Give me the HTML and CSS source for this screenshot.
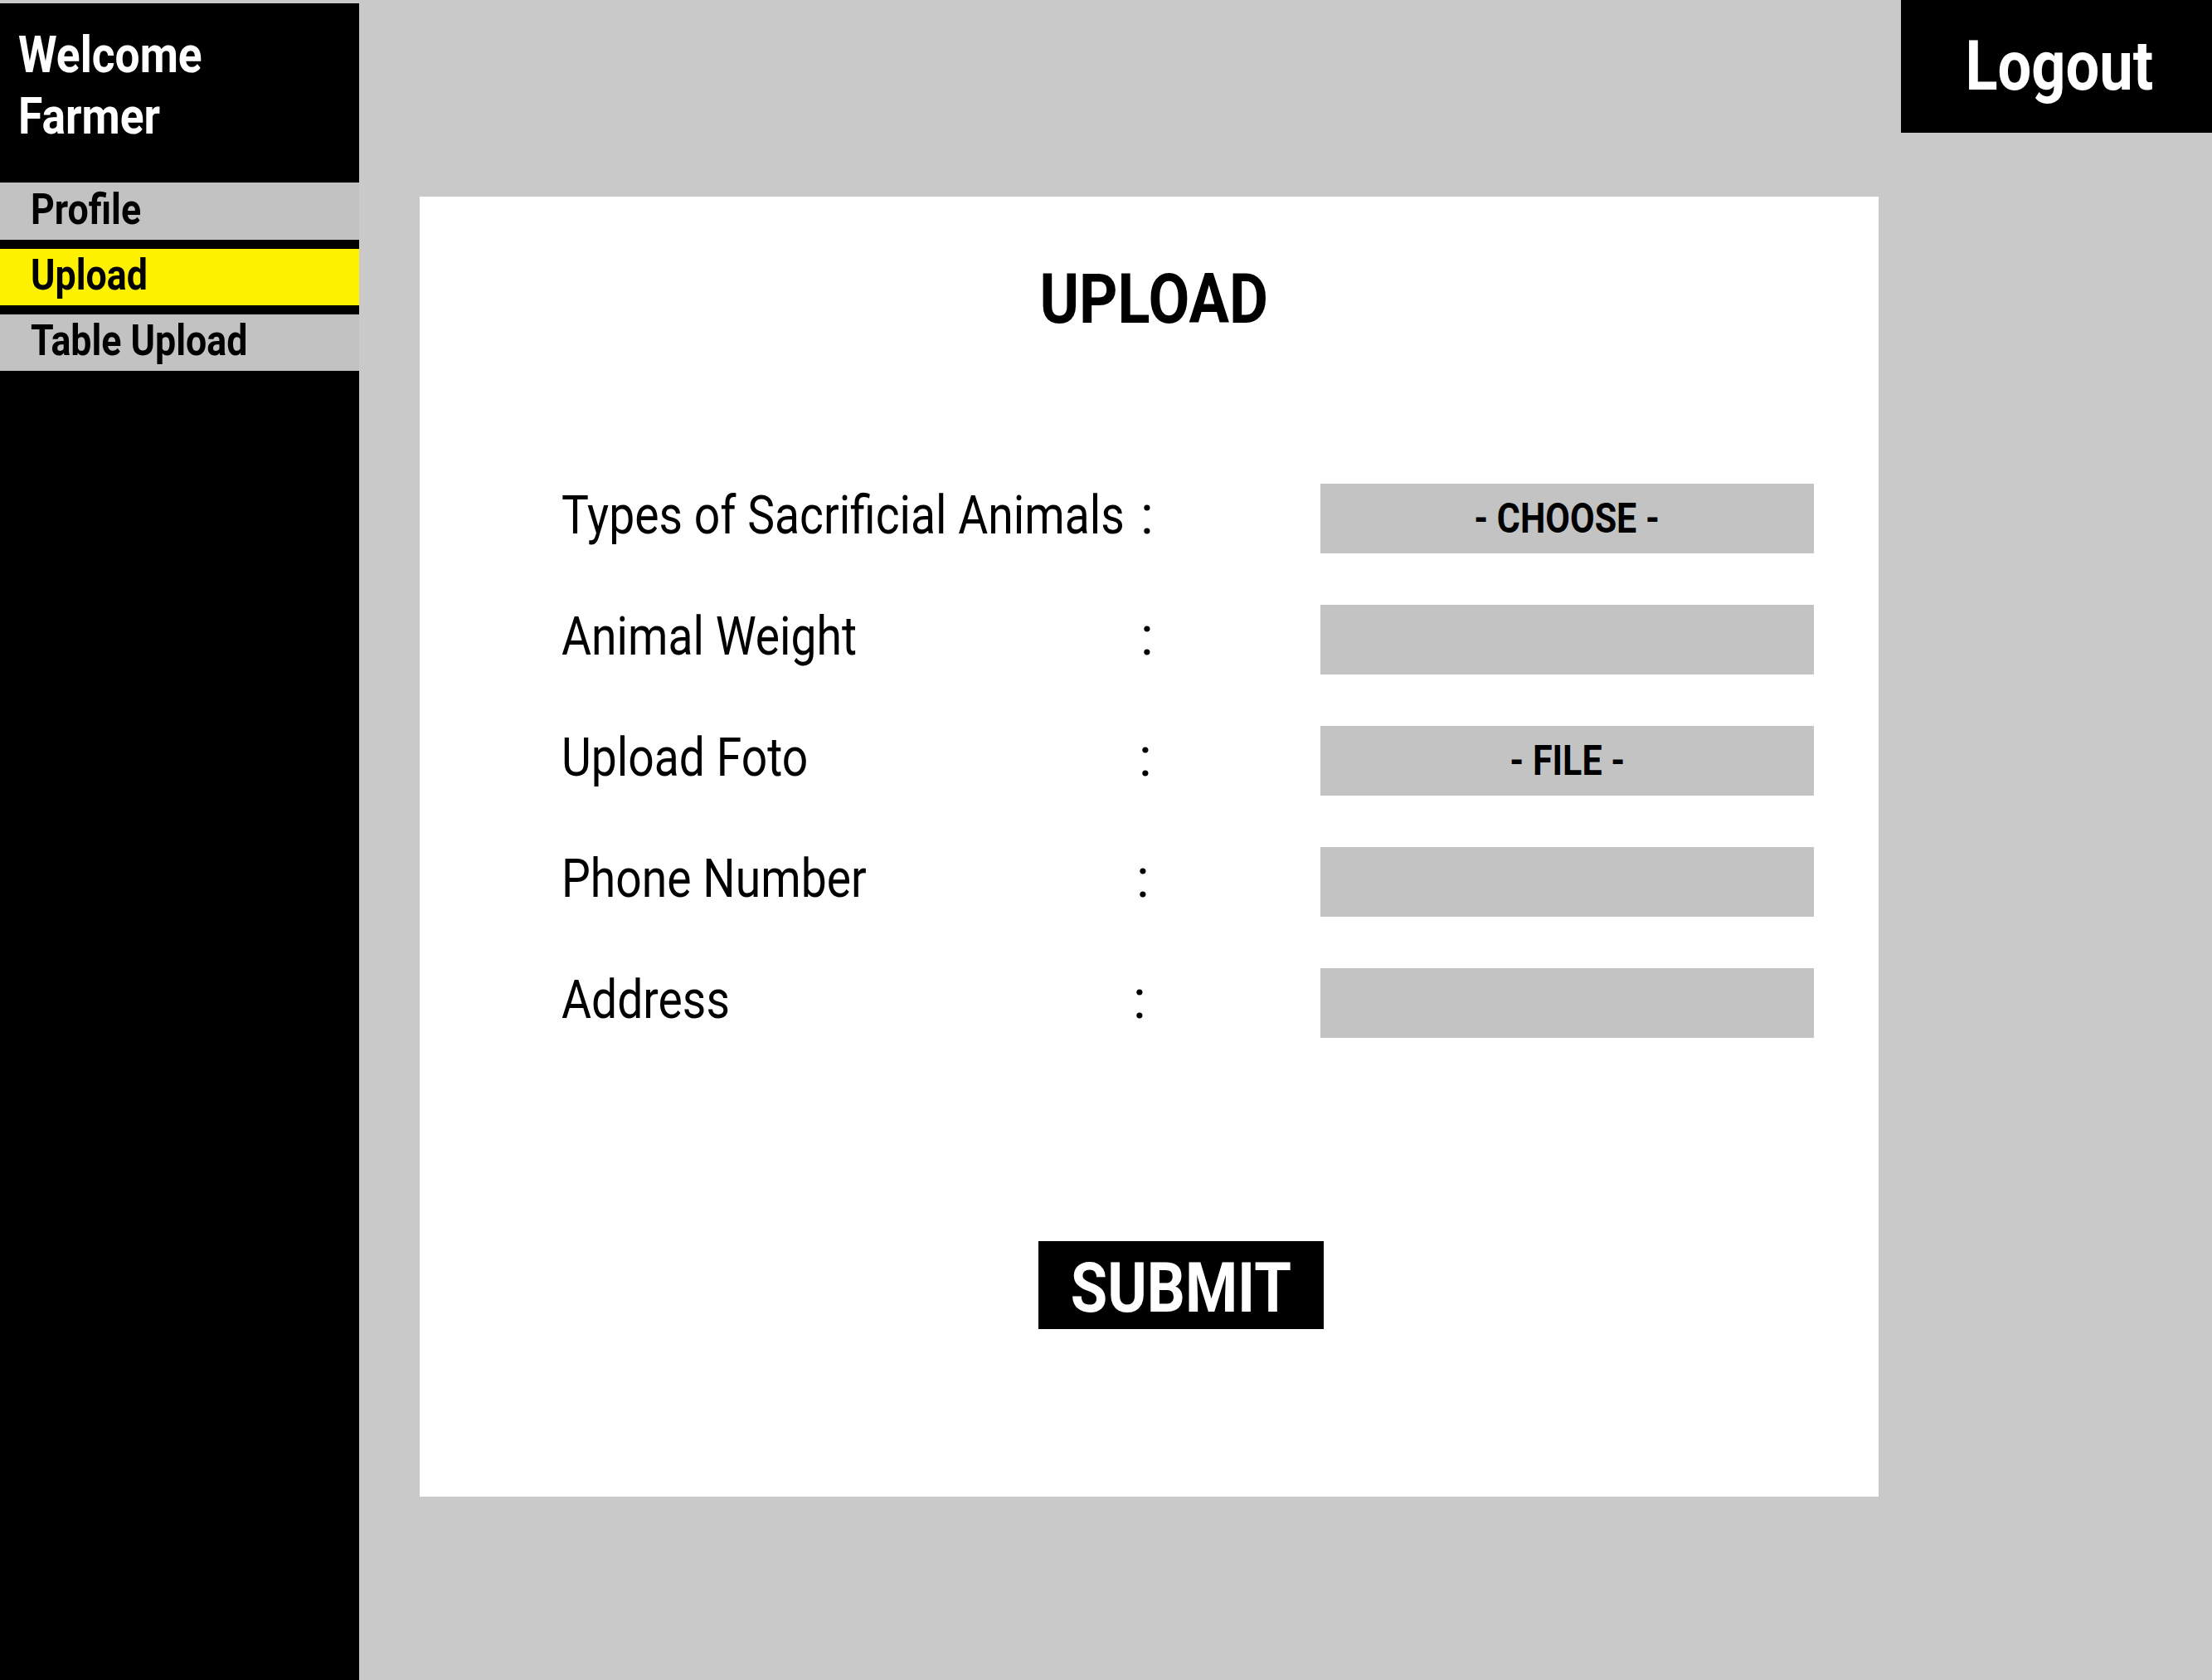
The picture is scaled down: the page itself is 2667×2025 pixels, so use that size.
FILE: index.html
```html
<!DOCTYPE html>
<html lang="en">
<head>
<meta charset="utf-8">
<title>Upload - Farmer</title>
<link rel="stylesheet" href="styles.css">
</head>
<body>
<div class="app">
  <aside class="sidebar">
    <div class="welcome"><span class="cond cond-left">Welcome<br>Farmer</span></div>
    <nav class="nav">
      <a class="nav-item" href="#"><span class="cond cond-left">Profile</span></a>
      <a class="nav-item nav-item-active" href="#"><span class="cond cond-left">Upload</span></a>
      <a class="nav-item" href="#"><span class="cond cond-left">Table Upload</span></a>
    </nav>
  </aside>
  <main class="main">
    <header class="topbar">
      <a class="logout" href="#"><span class="cond">Logout</span></a>
    </header>
    <section class="card">
      <h1 class="title"><span class="cond">UPLOAD</span></h1>
      <form class="form">
        <div class="label"><span class="cond cond-left cond-label">Types of Sacrificial Animals</span></div>
        <div class="colon">:</div>
        <div class="field field-text"><span class="cond">- CHOOSE -</span></div>

        <div class="label"><span class="cond cond-left cond-label">Animal Weight</span></div>
        <div class="colon">:</div>
        <div class="field"></div>

        <div class="label"><span class="cond cond-left cond-label">Upload Foto</span></div>
        <div class="colon colon-shift1">:</div>
        <div class="field field-text"><span class="cond">- FILE -</span></div>

        <div class="label"><span class="cond cond-left cond-label">Phone Number</span></div>
        <div class="colon colon-shift2">:</div>
        <div class="field"></div>

        <div class="label"><span class="cond cond-left cond-label">Address</span></div>
        <div class="colon colon-shift3">:</div>
        <div class="field"></div>
      </form>
      <div class="actions">
        <a class="submit" href="#"><span class="cond">SUBMIT</span></a>
      </div>
    </section>
  </main>
</div>
</body>
</html>
```
FILE: styles.css
```css
* {
  box-sizing: border-box;
}

html, body {
  margin: 0;
  padding: 0;
}

body {
  background: #c9c9c9;
  font-family: Roboto, "Liberation Sans", sans-serif;
  color: #000;
}

a {
  text-decoration: none;
  color: inherit;
}

.cond {
  display: inline-block;
  transform: scaleX(0.86);
  transform-origin: center;
  white-space: nowrap;
}

.cond-left {
  transform-origin: left center;
}

.cond-label {
  transform: scaleX(0.85);
}

.app {
  display: flex;
  height: 2025px;
  overflow: hidden;
}

/* Sidebar */
.sidebar {
  width: 433px;
  flex: none;
  margin-top: 4px;
  background: #000;
  display: flex;
  flex-direction: column;
}

.welcome {
  height: 216px;
  padding: 25px 0 0 22px;
  color: #fff;
  font-size: 62px;
  font-weight: 700;
  line-height: 74px;
}

.nav {
  display: flex;
  flex-direction: column;
}

.nav-item {
  display: block;
  height: 68px;
  line-height: 64px;
  padding-left: 37px;
  background: #c2c2c2;
  font-size: 52px;
  font-weight: 700;
  margin-bottom: 11px;
}

.nav-item:first-child {
  height: 69px;
  line-height: 66px;
}

.nav-item-active {
  background: #fff200;
}

/* Main */
.main {
  flex: 1;
  display: flex;
  flex-direction: column;
}

.topbar {
  display: flex;
  justify-content: flex-end;
  height: 160px;
}

.logout {
  width: 375px;
  height: 160px;
  background: #000;
  color: #fff;
  font-size: 84px;
  font-weight: 700;
  line-height: 160px;
  text-align: center;
  padding-left: 6px;
}

.card {
  margin: 77px 0 0 73px;
  width: 1759px;
  height: 1567px;
  background: #fff;
  padding-top: 74px;
}

.title {
  margin: 0;
  font-size: 84px;
  font-weight: 700;
  line-height: 100px;
  text-align: center;
  padding-left: 12px;
}

.form {
  margin: 172px 0 0 171px;
  display: grid;
  grid-template-columns: 698px 217px 595px;
  grid-auto-rows: 84px;
  row-gap: 62px;
}

.label {
  font-size: 65px;
  line-height: 76px;
}

.colon {
  font-size: 65px;
  line-height: 76px;
}

.colon-shift1 {
  margin-left: -2px;
}

.colon-shift2 {
  margin-left: -5px;
}

.colon-shift3 {
  margin-left: -9px;
}

.field {
  background: #c3c3c3;
  height: 84px;
}

.field-text {
  text-align: center;
  font-size: 50px;
  font-weight: 700;
  line-height: 84px;
}

.actions {
  margin: 245px 0 0 746px;
  display: flex;
}

.submit {
  display: block;
  width: 344px;
  height: 106px;
  padding-top: 8px;
  background: #000;
  color: #fff;
  font-size: 84px;
  font-weight: 700;
  line-height: 98px;
  text-align: center;
}
```
